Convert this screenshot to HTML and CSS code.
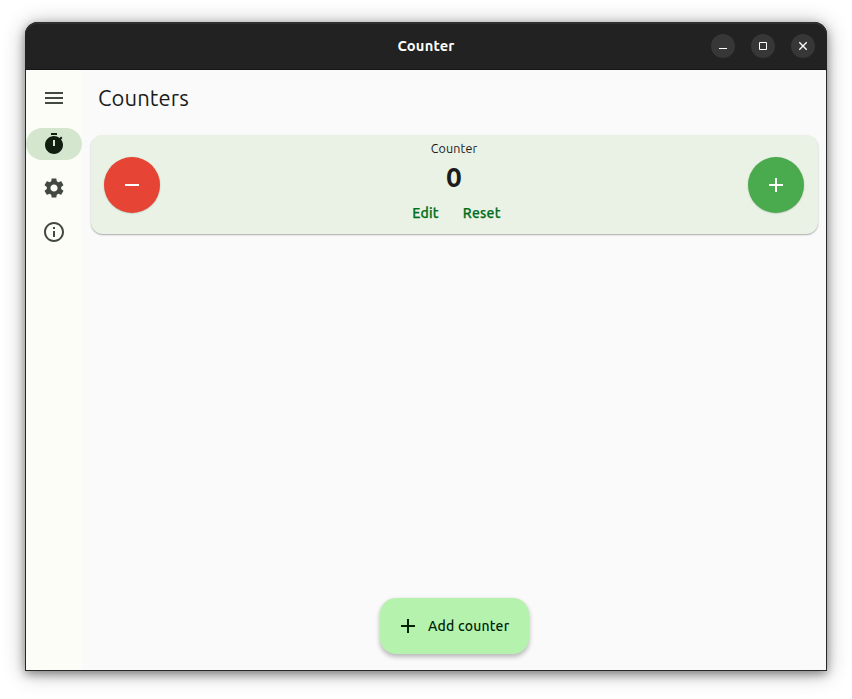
FILE: index.html
```html
<!DOCTYPE html>
<html lang="en">
<head>
<meta charset="utf-8">
<title>Counter</title>
<link rel="stylesheet" href="styles.css">
</head>
<body>
<div class="window">
  <header class="titlebar">
    <span class="title">Counter</span>
    <div class="controls">
      <button aria-label="Minimize"><svg width="24" height="24" viewBox="0 0 24 24"><path d="M8 14.5h8" stroke="#fff" fill="none"/></svg></button>
      <button aria-label="Maximize"><svg width="24" height="24" viewBox="0 0 24 24"><path d="M8.5 8.5h7v7h-7z" stroke="#fff" fill="none"/></svg></button>
      <button aria-label="Close"><svg width="24" height="24" viewBox="0 0 24 24"><path d="M8.3 8.3l7.4 7.4M15.7 8.3l-7.4 7.4" stroke="#fff" stroke-width="1.3" fill="none"/></svg></button>
    </div>
  </header>
  <div class="body">
    <nav class="rail">
      <a class="menu"><svg width="24" height="24" viewBox="0 0 24 24"><path d="M3 18h18v-2H3v2zm0-5h18v-2H3v2zm0-7v2h18V6H3z"/></svg></a>
      <a class="item active"><svg width="24" height="24" viewBox="0 0 24 24"><path d="M9 1h6v2H9zM19.03 7.39l1.42-1.42c-.43-.51-.9-.99-1.41-1.41l-1.42 1.42C16.07 4.74 14.12 4 12 4c-4.97 0-9 4.03-9 9s4.02 9 9 9 9-4.03 9-9c0-2.12-.74-4.07-1.97-5.61zM13 14h-2V8h2v6z"/></svg></a>
      <a class="item"><svg width="24" height="24" viewBox="0 0 24 24"><path d="M19.14 12.94c.04-.3.06-.61.06-.94 0-.32-.02-.64-.07-.94l2.03-1.58c.18-.14.23-.41.12-.61l-1.92-3.32c-.12-.22-.37-.29-.59-.22l-2.39.96c-.5-.38-1.03-.7-1.62-.94l-.36-2.54c-.04-.24-.24-.41-.48-.41h-3.84c-.24 0-.43.17-.47.41l-.36 2.54c-.59.24-1.13.57-1.62.94l-2.39-.96c-.22-.08-.47 0-.59.22L2.74 8.87c-.12.21-.08.47.12.61l2.03 1.58c-.05.3-.09.63-.09.94s.02.64.07.94l-2.03 1.58c-.18.14-.23.41-.12.61l1.92 3.32c.12.22.37.29.59.22l2.39-.96c.5.38 1.03.7 1.62.94l.36 2.54c.05.24.24.41.48.41h3.84c.24 0 .44-.17.47-.41l.36-2.54c.59-.24 1.13-.56 1.62-.94l2.39.96c.22.08.47 0 .59-.22l1.92-3.32c.12-.22.07-.47-.12-.61l-2.01-1.58zM12 15.6c-1.98 0-3.6-1.62-3.6-3.6s1.62-3.6 3.6-3.6 3.6 1.62 3.6 3.6-1.62 3.6-3.6 3.6z"/></svg></a>
      <a class="item"><svg width="24" height="24" viewBox="0 0 24 24"><path d="M11 7h2v2h-2zm0 4h2v6h-2zm1-9C6.48 2 2 6.48 2 12s4.48 10 10 10 10-4.48 10-10S17.52 2 12 2zm0 18c-4.41 0-8-3.59-8-8s3.59-8 8-8 8 3.59 8 8-3.59 8-8 8z"/></svg></a>
    </nav>
    <main class="main">
      <h1><span class="heading">Counters</span></h1>
      <section class="card">
        <button class="round minus" aria-label="Decrease"><svg width="24" height="24" viewBox="0 0 24 24"><path d="M19 13H5v-2h14v2z"/></svg></button>
        <div class="center">
          <div class="name">Counter</div>
          <div class="value">0</div>
          <div class="actions"><button class="edit">Edit</button><button class="reset">Reset</button></div>
        </div>
        <button class="round plus" aria-label="Increase"><svg width="24" height="24" viewBox="0 0 24 24"><path d="M19 13h-6v6h-2v-6H5v-2h6V5h2v6h6v2z"/></svg></button>
      </section>
      <button class="add"><svg width="24" height="24" viewBox="0 0 24 24"><path d="M19 13h-6v6h-2v-6H5v-2h6V5h2v6h6v2z"/></svg><span>Add counter</span></button>
    </main>
  </div>
</div>
</body>
</html>
```
FILE: styles.css
```css
* { box-sizing: border-box; }
body {
  margin: 0;
  height: 699px;
  padding: 22px 25px 28px;
  background: #fff;
  overflow: hidden;
  font-family: Ubuntu, "Noto Sans", sans-serif;
  color: #1b1c1b;
}
button { border: 0; padding: 0; background: none; font: inherit; letter-spacing: inherit; color: inherit; }
svg { display: block; fill: currentColor; }
.window {
  height: 649px;
  display: flex;
  flex-direction: column;
  border-radius: 13px 13px 0 0;
  background: #262829;
  box-shadow: 0 3px 10px rgba(0,0,0,.38), 0 2px 22px rgba(0,0,0,.3);
}
.titlebar {
  height: 48px;
  display: grid;
  grid-template-columns: 1fr auto 1fr;
  align-items: center;
  padding: 0 12px;
  border-radius: 13px 13px 0 0;
  background: #222;
  box-shadow: inset 0 2px #303030, inset 0 -1px #171717;
}
.title {
  grid-column: 2;
  padding-bottom: 2px;
  color: #fff;
  font-size: 14.67px;
  font-weight: 700;
  letter-spacing: .2px;
}
.controls { display: flex; gap: 16px; justify-content: flex-end; }
.controls button { width: 24px; height: 24px; border-radius: 50%; background: #373737; }
.body { flex: 1; display: flex; margin: 0 1px 1px; background: #fafafa; }
.rail { width: 56px; padding-top: 12px; background: #fcfdf6; color: #424940; }
.rail a { display: flex; align-items: center; justify-content: center; height: 32px; border-radius: 16px; }
.rail .menu { margin-bottom: 14px; }
.rail .item { margin-bottom: 12px; }
.rail .active { background: #d4e7ce; color: #101f10; }
.main { flex: 1; display: flex; flex-direction: column; padding: 0 8px 16px; }
h1 { height: 65px; margin: 0; padding: 0 8px; font-size: 22px; font-weight: 400; line-height: 56px; }
.heading { letter-spacing: .1px; }
.card {
  height: 99px;
  display: flex;
  align-items: center;
  justify-content: space-between;
  margin: 0 .5px;
  padding: 0 13.5px;
  border-radius: 12px;
  background: #eaf2e6;
  box-shadow: 0 1px 1.5px rgba(0,0,0,.28), 0 1px 3px rgba(0,0,0,.06);
}
.round {
  width: 56px;
  height: 56px;
  display: grid;
  place-items: center;
  border-radius: 50%;
  color: #fff;
  box-shadow: 0 .5px 1.5px rgba(0,0,0,.24);
}
.minus { background: #e64435; }
.plus { background: #49ab4e; }
.center { align-self: stretch; display: flex; flex-direction: column; align-items: center; padding-top: 5px; }
.name { font-size: 12.5px; line-height: 17px; letter-spacing: .1px; }
.value { font-size: 28px; font-weight: 700; line-height: 40px; }
.actions { display: flex; gap: 24px; color: #006e1c; font-size: 14px; font-weight: 500; letter-spacing: .25px; line-height: 32px; padding-left: 5px; -webkit-text-stroke: .25px currentColor; }
.add {
  width: 149px;
  height: 56px;
  margin: auto auto 0 290px;
  display: flex;
  align-items: center;
  gap: 8px;
  padding-left: 16px;
  border-radius: 16px;
  background: #b5f2ae;
  color: #002204;
  font-size: 14px;
  font-weight: 500;
  letter-spacing: .2px;
  white-space: nowrap;
  box-shadow: 0 3px 5px rgba(0,0,0,.24), 0 1px 5px rgba(0,0,0,.06);
}
```
